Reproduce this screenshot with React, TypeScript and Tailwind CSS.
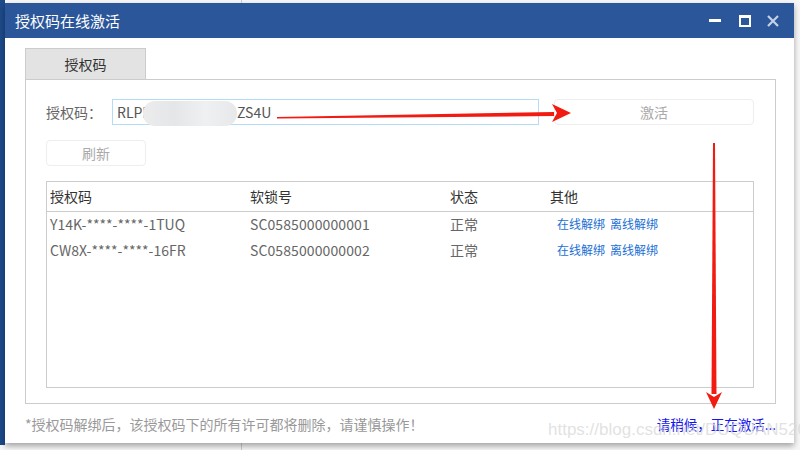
import React from 'react';

const rows = [
  { code: 'Y14K-****-****-1TUQ', lock: 'SC0585000000001', status: '正常' },
  { code: 'CW8X-****-****-16FR', lock: 'SC0585000000002', status: '正常' },
];

const font = { fontFamily: '"Noto Sans CJK SC", "Noto Sans", sans-serif' };

export default function App() {
  return (
    <div className="relative w-[800px] h-[450px] overflow-hidden bg-[#f7f7f7] text-[#555]" style={font}>
      {/* desktop behind */}
      <div className="absolute left-0 top-0 w-[5px] h-[445px] bg-[#1d4a8a]" />
      <div className="absolute left-[241px] top-0 w-px h-[4px] bg-[#ccc]" />
      <div className="absolute left-[241px] top-[443px] w-px h-[7px] bg-[#ccc]" />

      {/* window */}
      <div className="relative ml-[5px] mt-[3px] w-[789px] h-[440px] bg-white flex flex-col shadow-[0_3px_6px_rgba(0,0,0,0.35)]">
        <div className="h-[35px] bg-[#2b579a] flex items-center pl-[10px] pr-[14px]">
          <span className="text-white text-[15px] leading-none">授权码在线激活</span>
          <div className="ml-auto flex items-center gap-[16px]">
            <div className="w-[12px] h-[3px] bg-white" />
            <div className="w-[12px] h-[12px] border-2 border-white border-t-[3px] ml-[2px]" />
            <svg width="14" height="14" viewBox="0 0 14 14" className="ml-[-1px]">
              <path d="M2 2 L12 12 M12 2 L2 12" stroke="#c5d1e6" strokeWidth="2.2" />
            </svg>
          </div>
        </div>

        <div className="px-[20px] pt-[10px] flex flex-col">
          {/* tab */}
          <div className="w-[121px] h-[31px] bg-[#e3e3e3] border border-[#ccc] border-b-0 flex items-center justify-center text-[14px] text-[#333]">
            授权码
          </div>
          <div className="w-[751px] h-[325px] border border-[#ccc] px-[20px] pt-[19px] flex flex-col">
            <div className="flex items-center h-[26px]">
              <span className="w-[66px] text-[14px] text-[#666]">授权码：</span>
              <div className="relative w-[427px] h-[26px] border border-[#b5dbf5] flex items-center pl-[4px] text-[14px] text-[#555]">
                <span>RLPF</span>
                <div className="absolute left-[30px] top-[1px] w-[94px] h-[25px] rounded-[12px] bg-[linear-gradient(90deg,#ececec,#e4e6e8,#eef0f2,#e6e8ea)]" />
                <span className="ml-[87px]">ZS4U</span>
              </div>
              <div className="ml-[15px] w-[200px] h-[26px] border border-[#eee] rounded-[4px] flex items-center justify-center text-[14px] text-[#aaa]">
                激活
              </div>
            </div>
            <div className="mt-[15px] w-[100px] h-[26px] border border-[#eee] rounded-[4px] flex items-center justify-center text-[14px] text-[#aaa]">
              刷新
            </div>

            <div className="mt-[15px] w-[708px] h-[207px] border border-[#ccc] flex flex-col">
              <div className="h-[30px] border-b border-[#ccc] flex items-center text-[14px] text-[#333]">
                <span className="w-[200px] pl-[3px]">授权码</span>
                <span className="w-[200px] pl-[3px]">软锁号</span>
                <span className="w-[100px] pl-[3px]">状态</span>
                <span className="pl-[3px]">其他</span>
              </div>
              <div className="mt-[-1px]">
                {rows.map(r => (
                  <div key={r.code} className="h-[26px] flex items-center text-[14px] text-[#666]">
                    <span className="w-[200px] pl-[3px]">{r.code}</span>
                    <span className="w-[200px] pl-[3px] tracking-[0.1px]">{r.lock}</span>
                    <span className="w-[100px] pl-[3px]">{r.status}</span>
                    <span className="pl-[10px] text-[12px] text-[#1a6fd4]">在线解绑</span>
                    <span className="pl-[5px] text-[12px] text-[#1a6fd4]">离线解绑</span>
                  </div>
                ))}
              </div>
            </div>
          </div>

          <div className="mt-[10px] flex items-center">
            <span className="text-[14px] text-[#999]">*授权码解绑后，该授权码下的所有许可都将删除，请谨慎操作！</span>
            <span className="ml-auto mr-[-2px] text-[#1414ee] text-[13.5px]">请稍候，正在激活...</span>
          </div>
        </div>
      </div>

      {/* watermark */}
      <div className="absolute left-[548px] top-[421px] text-[17px] text-[#dadada]/80 font-['Liberation_Sans'] leading-none whitespace-nowrap">
        https://blog.csdn.net/DUQUAN520
      </div>

      {/* red annotation arrows */}
      <svg className="absolute left-0 top-0" width="800" height="450" viewBox="0 0 800 450">
        <polygon points="277,117 554,112 554,116 277,118.5" fill="#f21b12" />
        <polygon points="552,104 571,113 552,122 557,113" fill="#f21b12" />
        <polygon points="713,143 715,143 716.5,394 711.5,394" fill="#f21b12" />
        <polygon points="706,392 714,409 722,392 714,397" fill="#f21b12" />
      </svg>
    </div>
  );
}
